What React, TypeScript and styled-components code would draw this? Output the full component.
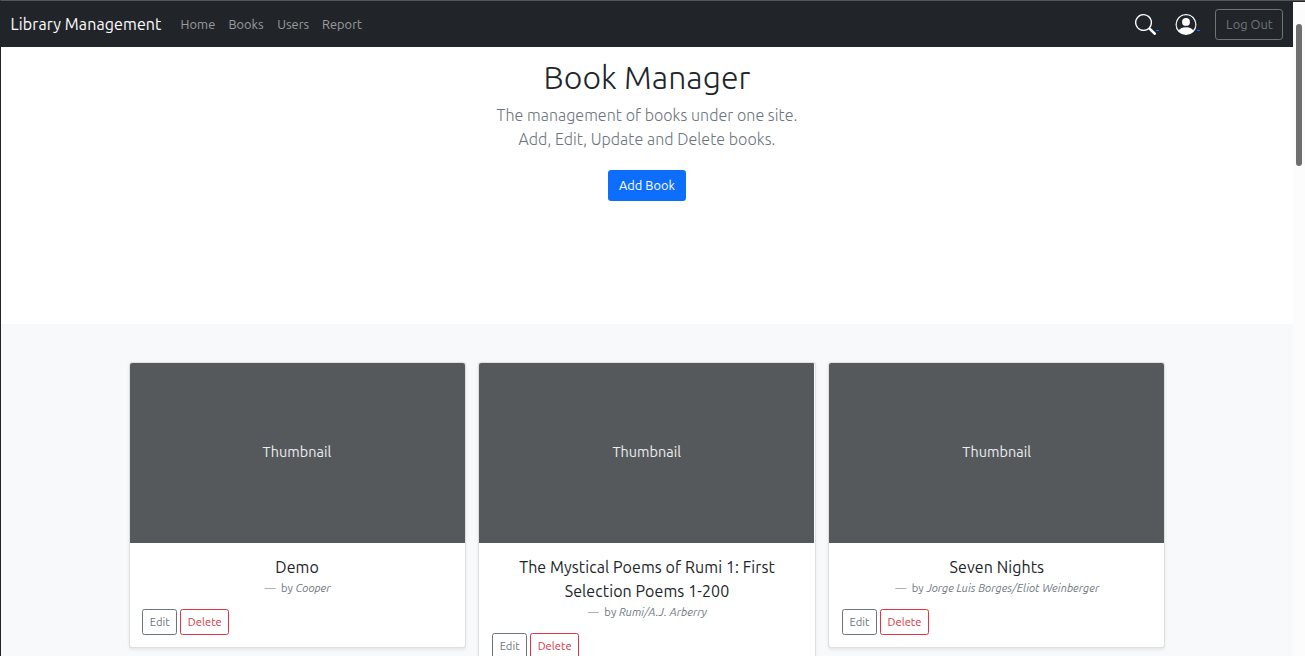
import React from "react";
import styled, { createGlobalStyle } from "styled-components";
import { BsPersonCircle, BsSearch } from "react-icons/bs";

const GlobalStyle = createGlobalStyle`
  *, *::before, *::after { box-sizing: border-box; }
  body {
    margin: 0;
    overflow: hidden;
    background: #fff;
    color: #212529;
    font-family: Ubuntu, "Open Sans", "Noto Sans", sans-serif;
    font-size: 12.8px;
    line-height: 1.5;
  }
  h1, h5, p { margin: 0; }
`;

const Window = styled.div`
  display: flex;
  height: 656px;
  border-top: 1px solid #555657;
  border-left: 1px solid #222426;
  overflow: hidden;
`;

const Page = styled.div`
  flex: 1;
  min-width: 0;
  overflow: hidden;
`;

const ScrollTrack = styled.div`
  width: 12px;
  padding: 22px 3px 0;
  border-top: 1px solid #222529;
  background: #fcfcfc;
`;

const ScrollThumb = styled.div`
  width: 6px;
  height: 142px;
  border-radius: 3px;
  background: #6f6f6f;
`;

const Navbar = styled.nav`
  display: flex;
  align-items: center;
  height: 46px;
  padding: 0 10px 0 9.6px;
  background: #212529;
`;

const Brand = styled.a`
  width: 151px;
  margin-right: 19px;
  color: #fff;
  font-size: 16px;
  letter-spacing: 0.1px;
  white-space: nowrap;
`;

const NavLink = styled.a<{ $width: number }>`
  width: ${(p) => p.$width}px;
  margin-right: 12.8px;
  color: #9b9d9e;
  font-size: 12.8px;
  letter-spacing: 0.04px;
  line-height: 20px;
  white-space: nowrap;
`;

const NavActions = styled.div`
  display: flex;
  align-items: center;
  margin-left: auto;
`;

const IconLink = styled.a<{ $width: number }>`
  display: flex;
  align-items: flex-end;
  width: ${(p) => p.$width + 3}px;
  margin-right: ${(p) => 37 - p.$width}px;
  padding-top: 1px;
  color: #fff;

  svg { display: block; width: ${(p) => p.$width}px; height: 21px; }
  &::after {
    content: "";
    width: 3px;
    height: 1px;
    margin-bottom: 4px;
    background: #0d6efd;
  }
`;

const tones = { gray: "#6c757d", red: "#dc3545" };

const OutlineButton = styled.button<{ $tone: keyof typeof tones; $width: number; $large?: boolean }>`
  width: ${(p) => p.$width}px;
  height: ${(p) => (p.$large ? 31 : 26)}px;
  padding: ${(p) => (p.$large ? "1px 0 0 1px" : "0 0 0 0.8px")};
  border: 1px solid ${(p) => tones[p.$tone]};
  border-radius: ${(p) => (p.$large ? 3.2 : 2.56)}px;
  background: transparent;
  color: ${(p) => tones[p.$tone]};
  font-family: inherit;
  font-size: ${(p) => (p.$large ? 12.8 : 11.2)}px;
  letter-spacing: 0.04px;
  line-height: 1.5;
  white-space: nowrap;
`;

const Hero = styled.section`
  display: flex;
  flex-direction: column;
  align-items: center;
  height: 276.6px;
  padding-top: 11px;
  text-align: center;
`;

const HeroTitle = styled.h1`
  font-size: 32px;
  font-weight: 300;
  letter-spacing: 0.06px;
  line-height: 38.4px;
`;

const Lead = styled.p`
  margin-top: 6.4px;
  color: #6c757d;
  font-size: 16px;
  font-weight: 300;
  letter-spacing: 0.04px;
  line-height: 24px;
`;

const AddButton = styled.button`
  width: 78px;
  height: 31px;
  margin-top: 19px;
  padding: 0;
  border: 0;
  border-radius: 3.2px;
  background: #0d6efd;
  color: #fff;
  font-family: inherit;
  font-size: 12.8px;
  letter-spacing: 0.06px;
`;

const Album = styled.section`
  height: 400px;
  padding: 38.4px 127.6px;
  background: #f8f9fa;
`;

const CardGrid = styled.div`
  display: grid;
  grid-template-columns: repeat(3, 1fr);
  align-items: start;
  gap: 12.8px;
`;

const Card = styled.article`
  border: 1px solid rgba(0, 0, 0, 0.125);
  border-radius: 3.2px;
  background: #fff;
  box-shadow: 0 1.6px 3.2px rgba(0, 0, 0, 0.075);
  overflow: hidden;
`;

const Thumbnail = styled.div`
  display: flex;
  align-items: center;
  justify-content: center;
  width: 335px;
  height: 180px;
  padding-right: 0.3px;
  background: #55595c;
  color: #eceeef;
  font-size: 14.4px;
  letter-spacing: 0.06px;
`;

const CardBody = styled.div`
  padding: 12.4px 12.3px 11.8px;
`;

const CardTitle = styled.h5`
  font-size: 16px;
  font-weight: 400;
  letter-spacing: 0.09px;
  line-height: 24px;
  text-align: center;
`;

const Byline = styled.p`
  height: 16.8px;
  padding-left: 0.8px;
  color: #6c757d;
  font-size: 11.2px;
  letter-spacing: 0.06px;
  line-height: 19px;
  text-align: center;
  white-space: nowrap;

  &::before { content: "—\\00A0\\00A0"; }
`;

const CardActions = styled.div`
  display: flex;
  gap: 3px;
  margin-top: 12.8px;
`;

const links = [
  { label: "Home", width: 35 },
  { label: "Books", width: 36 },
  { label: "Users", width: 32 },
  { label: "Report", width: 41 },
];

const books = [
  { title: ["Demo"], author: "Cooper" },
  { title: ["The Mystical Poems of Rumi 1: First", "Selection Poems 1-200"], author: "Rumi/A.J. Arberry" },
  { title: ["Seven Nights"], author: "Jorge Luis Borges/Eliot Weinberger" },
];

export default function App() {
  return (
    <>
      <GlobalStyle />
      <Window>
        <Page>
          <Navbar>
            <Brand>Library Management</Brand>
            {links.map((l) => (
              <NavLink key={l.label} $width={l.width}>{l.label}</NavLink>
            ))}
            <NavActions>
              <IconLink $width={21}><BsSearch /></IconLink>
              <IconLink $width={22}><BsPersonCircle /></IconLink>
              <OutlineButton $tone="gray" $width={68} $large>Log Out</OutlineButton>
            </NavActions>
          </Navbar>
          <Hero>
            <HeroTitle>Book Manager</HeroTitle>
            <Lead>
              The management of books under one site.
              <br />
              Add, Edit, Update and Delete books.
            </Lead>
            <AddButton>Add Book</AddButton>
          </Hero>
          <Album>
            <CardGrid>
              {books.map((b) => (
                <Card key={b.author}>
                  <Thumbnail>Thumbnail</Thumbnail>
                  <CardBody>
                    <CardTitle>
                      {b.title.map((line, i) => (
                        <React.Fragment key={line}>
                          {i > 0 && <br />}
                          {line}
                        </React.Fragment>
                      ))}
                    </CardTitle>
                    <Byline>by <em>{b.author}</em></Byline>
                    <CardActions>
                      <OutlineButton $tone="gray" $width={35}>Edit</OutlineButton>
                      <OutlineButton $tone="red" $width={49}>Delete</OutlineButton>
                    </CardActions>
                  </CardBody>
                </Card>
              ))}
            </CardGrid>
          </Album>
        </Page>
        <ScrollTrack>
          <ScrollThumb />
        </ScrollTrack>
      </Window>
    </>
  );
}
